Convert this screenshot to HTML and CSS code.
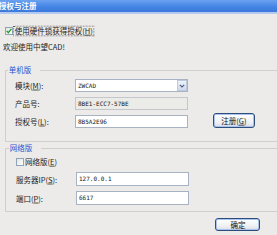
FILE: index.html
```html
<!DOCTYPE html>
<html>
<head>
<meta charset="utf-8">
<title>授权与注册</title>
<link rel="stylesheet" href="styles.css">
</head>
<body>
<div class="dialog">
  <div class="titlebar"><span class="title">授权与注册</span></div>
  <div class="content">
    <div class="check-row">
      <span class="box"><svg width="6" height="6" viewBox="0 0 6 6"><polyline points="0.7,2.9 2.3,4.7 5.4,0.9" fill="none" stroke="#22a022" stroke-width="1.4"/></svg></span>
      <span class="focus">使用硬件锁获得授权(<u>H</u>)</span>
    </div>
    <p class="welcome">欢迎使用中望CAD!</p>

    <fieldset class="group g1">
      <legend>单机版</legend>
      <div class="grid1">
        <span class="lbl">模块(<u>M</u>):</span>
        <div class="field combo"><span class="val">ZWCAD</span><span class="arrow"><svg width="6" height="4" viewBox="0 0 6 4"><polyline points="0.8,0.8 3,3 5.2,0.8" fill="none" stroke="#4b5d80" stroke-width="1.1"/></svg></span></div>
        <span class="lbl">产品号:</span>
        <div class="field disabled"><span class="val">8BE1-ECC7-57BE</span></div>
        <span class="lbl">授权号(<u>L</u>):</span>
        <div class="field"><span class="val">8B5A2E96</span></div>
        <button class="btn reg"><span class="bt">注册(<u>G</u>)</span></button>
      </div>
    </fieldset>

    <fieldset class="group g2">
      <legend>网络版</legend>
      <div class="grid2">
        <div class="check-row sub">
          <span class="box empty"></span>
          <span class="txt">网络版(<u>E</u>)</span>
        </div>
        <span class="lbl">服务器IP(<u>S</u>):</span>
        <div class="field tall"><span class="val">127.0.0.1</span></div>
        <span class="lbl">端口(<u>P</u>):</span>
        <div class="field tall"><span class="val">6617</span></div>
      </div>
    </fieldset>

    <div class="footer">
      <button class="btn ok"><span class="bt">确定</span></button>
    </div>
  </div>
</div>
</body>
</html>
```

FILE: styles.css
```css
* { box-sizing: border-box; }
html, body { margin: 0; padding: 0; }
body {
  width: 277px;
  height: 235px;
  overflow: hidden;
  background: #ecebe9;
  font-family: "Noto Sans CJK SC", sans-serif;
  font-size: 10px;
  color: #1b1b1b;
}
.dialog { width: 300px; }

/* small UI text: drawn at 10px, shown at 7.5px */
.title, .focus, .welcome, .group legend, .lbl, .txt {
  font-size: 10px;
  transform: scale(0.75);
  transform-origin: left center;
  white-space: nowrap;
}

.titlebar {
  height: 14px;
  background: linear-gradient(#6ba3f0, #4585e4 55%, #3b79dc);
  border-bottom: 2px solid #b3caee;
  display: flex;
  align-items: center;
}
.title {
  color: #fff;
  font-weight: bold;
  line-height: 8px;
  margin-left: -1px;
}

.content { padding: 12px 0 0 5px; }

.check-row {
  display: flex;
  align-items: center;
  height: 9px;
  gap: 1px;
}
.box {
  width: 8px;
  height: 8px;
  border: 1px solid #8fa3bb;
  background: linear-gradient(135deg, #e4e4de, #fefefe);
  display: flex;
  align-items: center;
  justify-content: center;
}
.focus {
  line-height: 12px;
  padding: 0 1px;
  outline: 1.333px dotted #555;
}

.welcome {
  margin: 7px 0 0 -2px;
  line-height: 9px;
}

.group {
  margin: 0;
  border: 1px solid #d0d0ca;
  padding: 5px 0 13px 9px;
  min-width: 0;
}
.group legend {
  color: #1f55d2;
  line-height: 8px;
  padding: 0 1px;
  margin-left: -7px;
}
.g1 { margin-top: 15px; }
.g2 { margin-top: 2px; padding: 5px 0 6px 10px; }

.grid1 {
  display: grid;
  grid-template-columns: 60px 113px 25px 42px;
  grid-template-rows: 13px 13px 13px;
  row-gap: 5px;
  align-items: center;
}
.grid1 .lbl { grid-column: 1; }
.grid1 .field { grid-column: 2; }
.grid1 .reg { grid-row: 3; grid-column: 4; }

.grid2 {
  display: grid;
  grid-template-columns: 60px 113px;
  grid-template-rows: 10px 14px 14px;
  row-gap: 5px;
  align-items: center;
}
.check-row.sub {
  grid-column: 1 / 3;
  align-self: start;
  margin-top: 1px;
  height: 8px;
  gap: 1px;
}
.txt { line-height: 8px; }

.lbl { line-height: 13px; }

.field {
  height: 13px;
  border: 1px solid #a7b3c3;
  background: #fff;
  display: flex;
  align-items: center;
  padding-left: 2px;
}
.field.tall { height: 14px; }
.field.disabled { background: #ebebe7; border-color: #c3c6ca; }
.val {
  zoom: 0.75;
  font-family: "DejaVu Sans Mono", "Liberation Mono", monospace;
  font-size: 8px;
  line-height: 10.667px;
  color: #141414;
}
.combo { justify-content: space-between; padding-right: 0; }
.arrow {
  width: 10px;
  height: 11px;
  border: 1px solid #bccadf;
  background: linear-gradient(#eef3fb, #cfd9ea);
  display: flex;
  align-items: center;
  justify-content: center;
}

.btn {
  font-family: "Noto Sans CJK SC", sans-serif;
  font-size: 10px;
  color: #111;
  padding: 0;
  border: 1px solid #2e4d7c;
  border-radius: 3px;
  background: linear-gradient(#ffffff, #eef0f3 65%, #d9dde5);
  box-shadow: inset 0 0 0 1px #a9c3ec;
  display: flex;
  align-items: center;
  justify-content: center;
}
.bt {
  line-height: 10px;
  white-space: nowrap;
  transform: scale(0.75);
  transform-origin: center;
}
.reg {
  height: 15px;
  align-self: end;
}
.footer {
  width: 255px;
  margin-top: 6px;
  display: flex;
  justify-content: flex-end;
}
.ok { width: 45px; height: 13px; }
```
